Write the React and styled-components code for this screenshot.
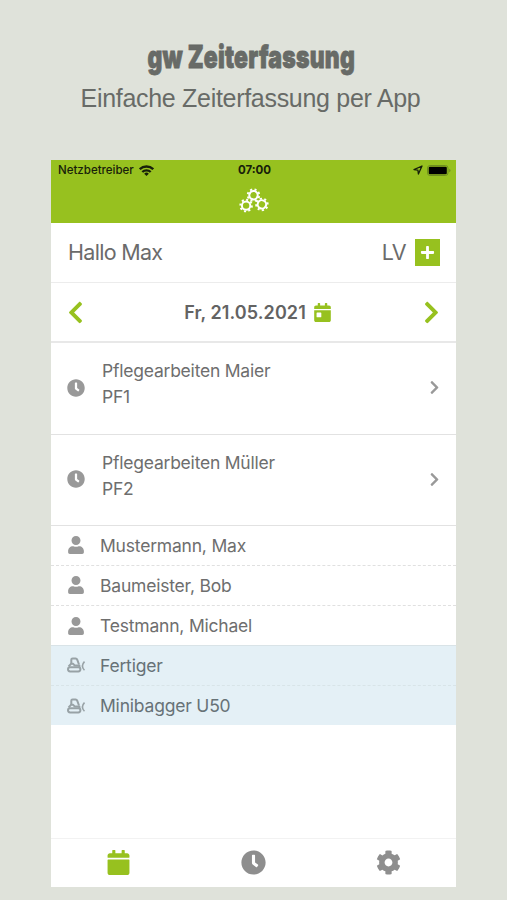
import styled, { createGlobalStyle } from "styled-components";
import {
    FaCalendar,
    FaCalendarDay,
    FaChevronLeft,
    FaChevronRight,
    FaClock,
    FaCog,
    FaPlus,
    FaUser,
} from "react-icons/fa";

const green = "#97c11f";

const orders = [
    { name: "Pflegearbeiten Maier", code: "PF1" },
    { name: "Pflegearbeiten Müller", code: "PF2" },
];

const people = ["Mustermann, Max", "Baumeister, Bob", "Testmann, Michael"];
const machines = ["Fertiger", "Minibagger U50"];

export default function App(){
    return (
        <>
            <GlobalStyle/>
            <Page>
                <Title>gw Zeiterfassung</Title>
                <Subtitle>Einfache Zeiterfassung per App</Subtitle>
                <Phone>
                    <Header>
                        <StatusBar>
                            <Carrier>Netzbetreiber <WifiIcon/></Carrier>
                            <Time>07:00</Time>
                            <StatusRight><LocationIcon/><BatteryIcon/></StatusRight>
                        </StatusBar>
                        <GearsIcon/>
                    </Header>
                    <Greeting>
                        <span>Hallo Max</span>
                        <Lv>LV <AddButton aria-label="Hinzufügen"><FaPlus/></AddButton></Lv>
                    </Greeting>
                    <DateBar>
                        <FaChevronLeft/>
                        <DateLabel>Fr, 21.05.2021 <FaCalendarDay/></DateLabel>
                        <FaChevronRight/>
                    </DateBar>
                    {orders.map((order) => (
                        <Order key={order.code}>
                            <FaClock size={18}/>
                            <OrderText>
                                <p>{order.name}</p>
                                <p>{order.code}</p>
                            </OrderText>
                            <FaChevronRight size={15}/>
                        </Order>
                    ))}
                    <List>
                        {people.map((name) => (
                            <Row key={name}><FaUser size={18}/><span>{name}</span></Row>
                        ))}
                    </List>
                    <List $highlight>
                        {machines.map((name) => (
                            <Row key={name} $highlight><DiggerIcon/><span>{name}</span></Row>
                        ))}
                    </List>
                    <TabBar>
                        <Tab $active><FaCalendar/></Tab>
                        <Tab><FaClock/></Tab>
                        <Tab><FaCog/></Tab>
                    </TabBar>
                </Phone>
            </Page>
        </>
    );
}

function WifiIcon(){
    return (
        <svg width="15" height="11" viewBox="0 0 15 11" fill="none" stroke="#17200a" strokeWidth="2.3">
            <path d="M.8 4.2a9.6 9.6 0 0 1 13.4 0"/>
            <path d="M3.3 7a6 6 0 0 1 8.4 0"/>
            <path d="M7.5 11 5.2 8.7a3.3 3.3 0 0 1 4.6 0z" fill="#17200a" stroke="none"/>
        </svg>
    );
}

function LocationIcon(){
    return (
        <svg width="10" height="10" viewBox="0 0 10 10" fill="none" stroke="#17200a" strokeWidth="1.3" strokeLinejoin="round">
            <path d="M9 1 1 4.6l3.9.5.5 3.9z"/>
        </svg>
    );
}

function BatteryIcon(){
    return (
        <svg width="24" height="11" viewBox="0 0 24 11">
            <rect x=".5" y=".5" width="20.5" height="10" rx="2.6" fill="none" stroke="#6f8e20"/>
            <rect x="1.7" y="1.7" width="18.1" height="7.6" rx="1.2" fill="#000"/>
            <path d="M22.2 3.7v3.6q1.3-.5 1.3-1.8t-1.3-1.8z" fill="#6f8e20"/>
        </svg>
    );
}

function Gear({ x, y, turn }){
    return (
        <g transform={`translate(${x} ${y}) rotate(${turn})`}>
            <circle r="4.2" strokeWidth="2"/>
            <circle r="5.8" strokeWidth="1.9" pathLength="64" strokeDasharray="3.8 4.2"/>
        </g>
    );
}

function GearsIcon(){
    return (
        <svg width="30" height="25" viewBox="0 0 30 25" fill="none" stroke="#fff">
            <Gear x={14.5} y={7.2} turn={10}/>
            <Gear x={7.1} y={17.6} turn={0}/>
            <Gear x={22.9} y={16.4} turn={24}/>
        </svg>
    );
}

function DiggerIcon(){
    return (
        <svg width="18" height="16" viewBox="0 0 18 16" fill="none" stroke="currentColor" strokeWidth="2" strokeLinejoin="round">
            <path d="M4.3 7V2.8q0-1.3 1.3-1.3h3q1.2 0 1.6 1.1L12 7.5"/>
            <path d="M1.6 9.5 4 6.8h2.2l1.4 1.6h4.8v2.2"/>
            <rect x="1" y="10.2" width="12.4" height="4.2" rx="2.1"/>
            <path d="M17.5 4.5q-4.2 4.4 0 8.8" strokeWidth="1.6"/>
        </svg>
    );
}

const GlobalStyle = createGlobalStyle`
    body{
        margin: 0;
        background-color: #dfe2da;
    }

    *{
        box-sizing: border-box;
    }

    p, h1, h2{
        margin: 0;
    }

    svg{
        flex-shrink: 0;
    }
`

const Page = styled.div`
    height: 900px;
    padding-top: 37px;
    display: flex;
    flex-direction: column;
    align-items: center;
    overflow: hidden;
    background-color: #dfe2da;
    color: #686b67;
    font-family: "Inter", sans-serif;
`

const Title = styled.h1`
    height: 40px;
    line-height: 40px;
    margin-left: -4px;
    font-size: 31px;
    font-weight: 900;
    letter-spacing: 0.3px;
    white-space: nowrap;
    -webkit-text-stroke: 0.8px #656864;
    transform: scaleX(0.74);
`

const Subtitle = styled.h2`
    height: 42px;
    line-height: 42px;
    margin-left: -6px;
    font-family: "Liberation Sans", Arial, sans-serif;
    font-size: 25px;
    font-weight: 400;
    letter-spacing: -0.3px;
    white-space: nowrap;
`

const Phone = styled.main`
    width: 405px;
    height: 727px;
    margin-top: 41px;
    display: flex;
    flex-direction: column;
    background-color: #fff;
`

const Header = styled.header`
    height: 63px;
    display: flex;
    flex-direction: column;
    align-items: center;
    background-color: ${green};
`

const StatusBar = styled.div`
    width: 100%;
    height: 20px;
    margin-bottom: 8px;
    padding: 0 5px 0 7px;
    display: grid;
    grid-template-columns: 1fr auto 1fr;
    align-items: center;
    color: #17200a;
    font-size: 11.5px;
`

const Carrier = styled.span`
    display: flex;
    align-items: center;
    gap: 5px;
    font-weight: 500;
`

const Time = styled.span`
    font-weight: 700;
`

const StatusRight = styled.span`
    display: flex;
    align-items: center;
    justify-content: flex-end;
    gap: 4px;
`

const Greeting = styled.section`
    height: 60px;
    padding: 0 16px 1px 17px;
    display: flex;
    align-items: center;
    justify-content: space-between;
    border-bottom: 1px solid #ececec;
    color: #6b6b6b;
    font-size: 21.5px;
    letter-spacing: -0.7px;
`

const Lv = styled.span`
    display: flex;
    align-items: center;
    gap: 9px;
`

const AddButton = styled.button`
    width: 25px;
    height: 27px;
    padding: 0;
    border: none;
    display: flex;
    align-items: center;
    justify-content: center;
    background-color: ${green};
    color: #fff;
    font-size: 15px;
`

const DateBar = styled.section`
    height: 60px;
    padding: 0 12px;
    display: flex;
    align-items: center;
    justify-content: space-between;
    border-bottom: 2px solid #e8e8e8;
    color: ${green};
    font-size: 25px;
`

const DateLabel = styled.span`
    margin-left: 9px;
    display: flex;
    align-items: center;
    gap: 7px;
    color: #636363;
    font-size: 18px;
    font-weight: 600;
    letter-spacing: 0.08px;

    svg{
        color: ${green};
        font-size: 19px;
    }
`

const Order = styled.article`
    height: 92px;
    padding: 0 14px 2px 16px;
    display: flex;
    align-items: center;
    border-bottom: 1px solid #e2e2e2;
    color: #999;

    & + &{
        height: 91px;
    }
`

const OrderText = styled.div`
    flex: 1;
    margin: -7px 0 0 17px;
    color: #6e6e6e;
    font-size: 17.5px;
    letter-spacing: -0.22px;
    line-height: 26px;
`

const List = styled.ul`
    margin: 0;
    padding: 0;
    background-color: ${({ $highlight }) => $highlight ? "#e4f0f6" : "#fff"};
    border-top: ${({ $highlight }) => $highlight ? "1px solid #d9e3e7" : "none"};
`

const Row = styled.li`
    height: 40px;
    padding-left: 16px;
    display: flex;
    align-items: center;
    gap: 15px;
    color: ${({ $highlight }) => $highlight ? "#98a2a6" : "#999"};
    font-size: 17.5px;
    letter-spacing: -0.2px;

    &:not(:last-child){
        padding-bottom: 1px;
        border-bottom: 1px dashed ${({ $highlight }) => $highlight ? "#d8e4e8" : "#e0e0e0"};
    }

    &:last-child{
        height: 39px;
    }

    svg{
        width: 18px;
    }

    span{
        color: ${({ $highlight }) => $highlight ? "#677277" : "#6e6e6e"};
    }
`

const TabBar = styled.nav`
    height: 49px;
    margin-top: auto;
    padding-bottom: 1px;
    display: grid;
    grid-template-columns: repeat(3, 1fr);
    border-top: 1px solid #f2f2f2;
`

const Tab = styled.a`
    display: flex;
    align-items: center;
    justify-content: center;
    color: ${({ $active }) => $active ? green : "#8e8e8e"};
    font-size: 25px;
`
